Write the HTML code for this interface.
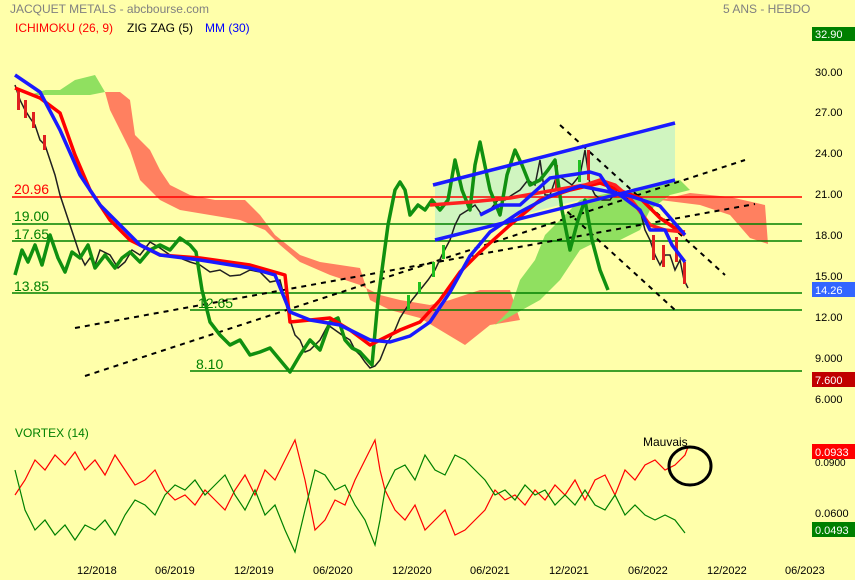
<!DOCTYPE html>
<html><head><meta charset="utf-8"><style>
html,body{margin:0;padding:0;background:#ffffaa;}
svg{display:block;font-family:"Liberation Sans",sans-serif;}
</style></head><body>
<svg width="855" height="580" viewBox="0 0 855 580" xmlns="http://www.w3.org/2000/svg">
<rect width="855" height="580" fill="#ffffaa"/>
<text x="10" y="13" font-size="12" fill="#808080">JACQUET METALS - abcbourse.com</text>
<text x="723" y="13" font-size="12" fill="#808080">5 ANS - HEBDO</text>
<text x="15" y="32" font-size="12" fill="#ff0000">ICHIMOKU (26, 9)</text>
<text x="127" y="32" font-size="12" fill="#000">ZIG ZAG (5)</text>
<text x="205" y="32" font-size="12" fill="#0000ff">MM (30)</text>

<!-- cloud -->
<polygon fill="#ff8060" points="105,92 120,92 130,100 135,135 150,150 160,170 170,185 190,195 215,200 245,200 260,215 275,235 300,255 320,262 340,265 360,268 370,300 390,310 420,318 440,330 465,345 490,325 520,320 510,290 480,290 450,300 430,305 400,300 380,295 360,285 330,275 300,262 280,245 265,230 240,220 210,215 180,210 160,200 140,180 130,150 120,130 110,110"/>
<polygon fill="#90e060" points="30,95 45,90 60,90 75,80 95,75 105,92 90,95 65,95 50,95"/>
<polygon fill="#90e060" points="495,325 510,310 520,280 535,260 545,235 560,220 580,200 600,190 620,195 640,185 660,182 680,180 690,190 670,195 650,210 640,230 620,240 600,240 580,250 560,280 540,300"/>
<polygon fill="#ff8060" points="660,200 690,193 730,197 765,205 768,244 750,238 730,215 700,205"/>
<polygon fill="#d0f5c0" points="435,185 675,123 675,180 600,195 540,210 435,240"/>

<!-- horizontal levels -->
<line x1="12" y1="197" x2="802" y2="197" stroke="#ff0000" stroke-width="1.5"/>
<line x1="12" y1="224" x2="802" y2="224" stroke="#008000" stroke-width="1.5"/>
<line x1="12" y1="241" x2="802" y2="241" stroke="#008000" stroke-width="1.5"/>
<line x1="12" y1="293" x2="802" y2="293" stroke="#008000" stroke-width="1.5"/>
<line x1="190" y1="310" x2="802" y2="310" stroke="#008000" stroke-width="1.5"/>
<line x1="190" y1="371" x2="802" y2="371" stroke="#008000" stroke-width="1.5"/>
<g font-size="14" fill="#ff0000"><text x="14" y="194">20.96</text></g>
<g font-size="14" fill="#008000"><text x="14" y="221">19.00</text><text x="14" y="239">17.65</text><text x="14" y="291">13.85</text><text x="198" y="308">12.65</text><text x="196" y="369">8.10</text></g>

<!-- dashed trendlines -->
<g stroke="#000" stroke-width="2" stroke-dasharray="5,5" fill="none">
<line x1="85" y1="376" x2="745" y2="160"/>
<line x1="75" y1="328" x2="755" y2="204"/>
<line x1="560" y1="125" x2="725" y2="275"/>
<line x1="560" y1="205" x2="675" y2="310"/>
</g>

<!-- price thin -->
<polyline fill="none" stroke="#202020" stroke-width="1.5" points="15,85 20,100 25,110 30,118 35,125 40,140 45,145 50,160 55,175 60,195 65,210 70,225 75,240 80,255 85,265 90,258 95,265 100,250 110,255 118,268 125,262 132,250 140,255 150,242 160,248 170,255 180,258 190,262 200,265 210,272 220,270 230,276 240,275 250,270 260,272 270,282 280,280 285,300 290,320 295,335 300,340 305,352 310,350 315,345 320,340 328,325 335,330 342,335 350,340 355,350 360,355 365,362 370,368 375,366 380,360 386,345 395,330 400,318 405,310 412,300 420,290 428,280 435,270 442,255 450,240 455,225 460,215 468,210 475,205 482,215 490,210 498,200 505,200 512,195 520,190 528,180 535,185 540,160 545,195 550,195 557,175 565,180 572,185 580,175 585,150 590,185 595,195 602,200 610,200 617,190 625,195 632,200 640,210 645,230 650,240 655,255 660,265 665,255 670,255 675,270 680,260 684,280 688,288"/>
<!-- some candles -->
<g stroke-width="0">
<rect x="17" y="90" width="3" height="20" fill="#e02020"/><rect x="24" y="100" width="3" height="18" fill="#e02020"/><rect x="32" y="112" width="3" height="16" fill="#e02020"/><rect x="43" y="135" width="3" height="15" fill="#e02020"/>
<rect x="407" y="295" width="3" height="15" fill="#20c020"/><rect x="418" y="282" width="3" height="12" fill="#20c020"/><rect x="432" y="262" width="3" height="15" fill="#20c020"/><rect x="442" y="245" width="3" height="14" fill="#20c020"/>
<rect x="555" y="165" width="3" height="25" fill="#e02020"/><rect x="578" y="160" width="3" height="22" fill="#20c020"/><rect x="587" y="150" width="3" height="30" fill="#e02020"/>
<rect x="652" y="235" width="3" height="25" fill="#e02020"/><rect x="662" y="245" width="3" height="22" fill="#e02020"/><rect x="675" y="237" width="3" height="25" fill="#e02020"/><rect x="683" y="262" width="3" height="22" fill="#e02020"/>
</g>
<!-- zigzag green -->
<polyline fill="none" stroke="#109010" stroke-width="3.5" stroke-linejoin="round" points="15,275 22,250 28,262 35,245 42,265 50,235 58,258 65,272 72,252 80,258 88,245 95,268 105,255 115,268 122,258 130,252 140,262 150,250 160,245 170,250 180,238 190,245 196,252 202,290 210,322 220,335 230,345 240,340 250,355 260,352 270,348 280,360 290,372 300,355 310,340 320,350 330,322 338,318 345,340 352,348 360,352 372,365 378,300 382,270 388,225 395,190 400,182 405,190 410,215 418,205 425,210 432,200 440,210 448,200 455,160 462,190 470,210 475,165 480,142 490,190 500,215 507,175 515,150 522,165 530,185 540,180 548,170 555,160 562,210 570,250 578,220 585,200 592,240 600,270 608,290"/>
<!-- red kijun -->
<polyline fill="none" stroke="#ff0000" stroke-width="3.5" stroke-linejoin="round" points="15,88 40,98 60,113 75,155 90,190 110,220 130,240 160,255 200,258 250,265 285,275 290,322 330,318 350,330 370,345 400,330 420,322 440,300 460,272 480,252 510,225 540,200 570,190 600,183 640,198 660,218 685,235"/>
<polyline fill="none" stroke="#ff2020" stroke-width="3.5" stroke-linejoin="round" points="430,205 470,202 510,198 555,190 585,185 600,180 615,185 630,198 650,225 665,230 685,232"/>
<!-- blue MM -->
<polyline fill="none" stroke="#1a1aff" stroke-width="3.5" stroke-linejoin="round" points="15,75 40,92 60,130 80,175 100,205 120,225 140,245 160,255 200,260 250,268 275,275 290,312 310,320 340,325 370,340 390,342 410,336 430,322 450,292 470,256 490,232 520,212 550,196 580,186 600,190 630,196 660,206 685,235"/>
<polyline fill="none" stroke="#1a1aff" stroke-width="3.5" stroke-linejoin="round" points="480,215 500,205 520,205 550,178 570,175 590,172 600,175 610,190 620,195 640,210 650,230 665,230 672,245 685,262"/>
<!-- blue trend -->
<line x1="433" y1="185" x2="675" y2="123" stroke="#1a1aff" stroke-width="3.5"/>
<line x1="435" y1="240" x2="675" y2="180" stroke="#1a1aff" stroke-width="3.5"/>

<!-- right axis -->
<g font-size="11" fill="#000">
<text x="815" y="76">30.00</text><text x="815" y="116">27.00</text><text x="815" y="157">24.00</text><text x="815" y="198">21.00</text><text x="815" y="239">18.00</text><text x="815" y="280">15.00</text><text x="815" y="321">12.00</text><text x="815" y="362">9.000</text><text x="815" y="403">6.000</text>
<text x="815" y="466" font-size="10">0.0900</text><text x="815" y="517">0.0600</text>
</g>
<rect x="812" y="27" width="43" height="14" fill="#008000"/><text x="815" y="38" font-size="11" fill="#fff">32.90</text>
<rect x="812" y="282" width="43" height="15" fill="#3366ff"/><text x="815" y="294" font-size="11" fill="#fff">14.26</text>
<rect x="812" y="372" width="43" height="15" fill="#c00000"/><text x="815" y="384" font-size="11" fill="#fff">7.600</text>
<rect x="812" y="444" width="43" height="15" fill="#ff0000"/><text x="815" y="456" font-size="11" fill="#fff">0.0933</text>
<rect x="812" y="522" width="43" height="15" fill="#008000"/><text x="815" y="534" font-size="11" fill="#fff">0.0493</text>

<!-- vortex -->
<text x="15" y="437" font-size="12" fill="#008000">VORTEX (14)</text>
<polyline fill="none" stroke="#ff0000" stroke-width="1.2" points="15,495 25,480 35,460 45,470 55,455 65,465 75,452 85,470 95,460 105,475 115,455 125,470 135,485 145,480 155,470 165,490 175,500 185,495 195,505 205,490 215,500 225,510 235,490 245,475 255,495 265,470 275,480 285,460 295,440 305,480 315,530 325,520 335,500 345,505 355,480 365,460 375,440 380,470 385,490 395,510 405,520 415,505 425,530 435,520 445,510 455,535 465,530 475,520 485,510 495,490 505,500 515,495 525,505 535,490 545,500 555,485 565,495 575,480 585,500 595,480 605,475 615,495 625,470 635,480 645,465 655,460 665,470 675,465 685,455 688,447"/>
<polyline fill="none" stroke="#008000" stroke-width="1.2" points="15,470 25,510 35,530 45,520 55,535 65,525 75,540 85,525 95,530 105,520 115,535 125,515 135,500 145,505 155,515 165,495 175,485 185,490 195,480 205,495 215,485 225,475 235,495 245,510 255,490 265,515 275,505 285,530 295,552 305,510 315,470 325,475 335,490 345,485 355,505 365,520 375,545 380,520 385,490 395,470 405,465 415,480 425,455 435,470 445,475 455,455 465,460 475,470 485,480 495,495 505,490 515,500 525,485 535,495 545,490 555,505 565,495 575,505 585,490 595,505 605,510 615,495 625,515 635,505 645,515 655,520 665,515 675,520 685,533"/>
<text x="643" y="446" font-size="12" fill="#000">Mauvais</text>
<ellipse cx="690" cy="466" rx="21" ry="19" fill="none" stroke="#000" stroke-width="3"/>

<!-- x axis -->
<g font-size="11" fill="#000">
<text x="77" y="574">12/2018</text><text x="155" y="574">06/2019</text><text x="234" y="574">12/2019</text><text x="313" y="574">06/2020</text><text x="392" y="574">12/2020</text><text x="470" y="574">06/2021</text><text x="549" y="574">12/2021</text><text x="628" y="574">06/2022</text><text x="707" y="574">12/2022</text><text x="785" y="574">06/2023</text>
</g>
</svg>
</body></html>
